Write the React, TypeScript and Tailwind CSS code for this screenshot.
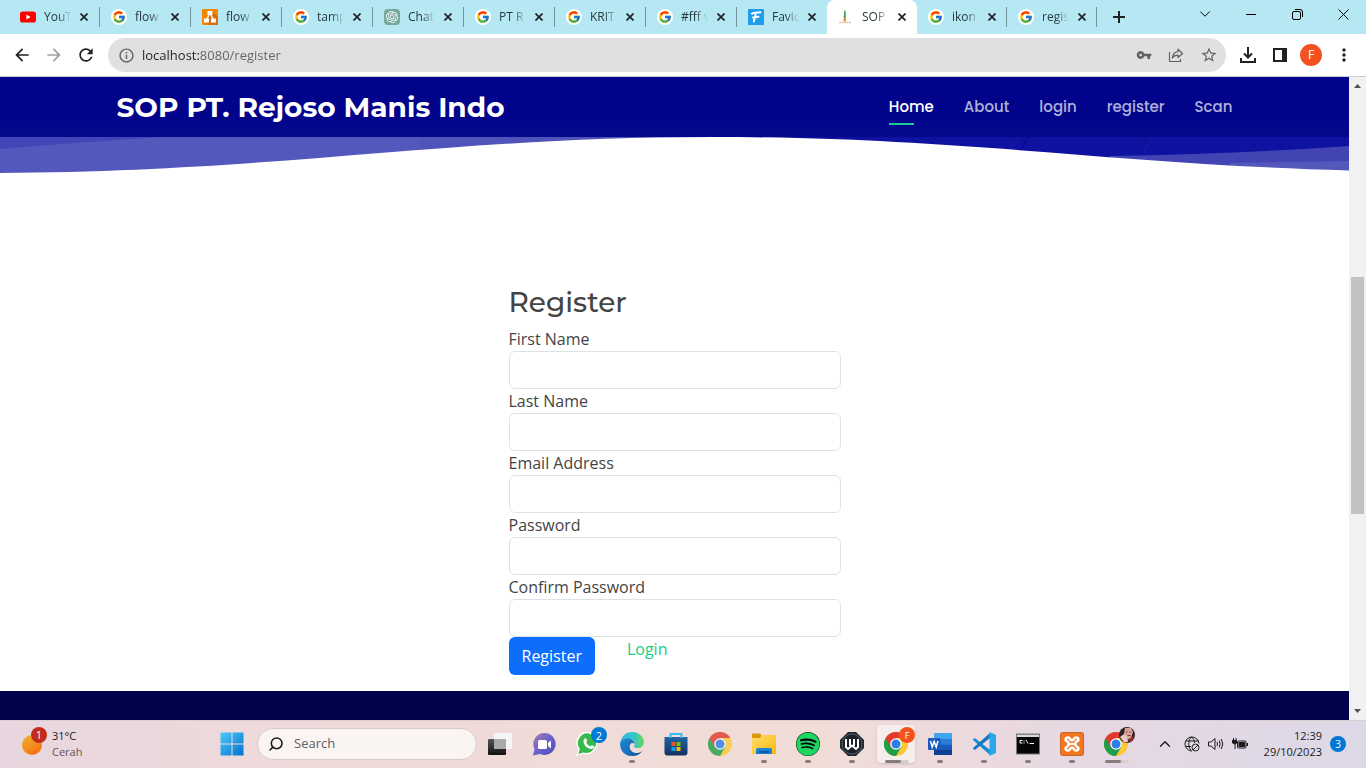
import React from "react";
import { FcGoogle } from "react-icons/fc";
import { FaSpotify } from "react-icons/fa";
import { SiOpenai } from "react-icons/si";
import {
  MdArrowBack,
  MdArrowForward,
  MdInfoOutline,
  MdMoreVert,
  MdRefresh,
  MdStarBorder,
  MdVpnKey,
} from "react-icons/md";
import { ChevronDown, ChevronUp, Search } from "lucide-react";

const Google = () => (
  <span className="flex size-4 items-center justify-center rounded-full bg-white">
    <FcGoogle size={14} />
  </span>
);

const YouTube = () => (
  <svg viewBox="0 0 16 16" className="size-4">
    <rect y="2.5" width="16" height="11" rx="2.6" fill="#f00" />
    <path d="M6.4 5.6v4.8L10.6 8z" fill="#fff" />
  </svg>
);

const Diagram = () => (
  <svg viewBox="0 0 16 16" className="size-4">
    <rect width="16" height="16" rx="1" fill="#f08705" />
    <path d="m10 2 6 6v8H8l-5-3z" fill="#df6c0c" />
    <path d="M8 4 4.5 11M8 4l3.5 7" stroke="#fff" strokeWidth="1.3" />
    <path d="M5.5 2h5v4h-5zM2 9.5h5v4H2zM9 9.5h5v4H9z" fill="#fff" />
  </svg>
);

const ChatGpt = () => (
  <span className="flex size-4 items-center justify-center rounded-sm bg-[#75a99b] text-white">
    <SiOpenai size={12} />
  </span>
);

const Favicon = () => (
  <svg viewBox="0 0 16 16" className="size-4">
    <rect width="16" height="16" rx="1" fill="#209cee" />
    <path d="M4 4.6C6 3 9 3.8 12.5 3.2M8 4 5.8 12.5M5 8.4c2-.6 4-.4 5.5-.6" fill="none" stroke="#fff" strokeWidth="2" strokeLinecap="round" />
  </svg>
);

const Cane = () => (
  <svg viewBox="0 0 16 16" className="size-4">
    <path d="M5.500 7h2.500v5.500H5.500z" fill="#e79a3c" />
    <path d="M6 3 6.800 1l.9 2v5H6z" fill="#3e9b4f" />
    <path d="M1 13.500h12.500" stroke="#e8bfa8" strokeWidth="1.500" strokeDasharray="2 .5" />
  </svg>
);

const tabs = [
  { title: "YouT", icon: <YouTube /> },
  { title: "flow", icon: <Google /> },
  { title: "flow", icon: <Diagram /> },
  { title: "tamp", icon: <Google /> },
  { title: "Chat", icon: <ChatGpt /> },
  { title: "PT R", icon: <Google /> },
  { title: "KRIT", icon: <Google /> },
  { title: "#fff v", icon: <Google /> },
  { title: "Favic", icon: <Favicon /> },
  { title: "SOP", icon: <Cane />, active: true },
  { title: "ikon", icon: <Google /> },
  { title: "regis", icon: <Google /> },
];

function TabStrip() {
  return (
    <div className="flex h-[34px] shrink-0 bg-[#b5e8f3] pl-[9px]">
      <div role="tablist" className="flex min-w-0">
        {tabs.map((tab, i) => (
          <div
            key={i}
            className={`flex min-w-0 items-center pl-[11px] ${i < 8 ? "w-[91px]" : "w-[90px]"} ${
              tab.active ? "rounded-t-lg bg-white" : i === 8 ? "rounded-br-lg" : ""
            }`}
          >
            <span className="shrink-0">{tab.icon}</span>
            <button
              role="tab"
              aria-selected={!!tab.active}
              className="ml-2 w-[30px] text-left text-xs whitespace-nowrap text-[#26383c] [mask-image:linear-gradient(to_right,black_14px,transparent_27px)]"
            >
              {tab.title}
            </button>
            <button aria-label="Close tab" className="ml-1.5 text-[#202124]">
              <svg viewBox="0 0 8 8" className="size-2" stroke="currentColor" strokeWidth="1.700">
                <path d="m.5.5 7 7M7.500.5l-7 7" />
              </svg>
            </button>
            <span className={`ml-auto h-5 w-px ${i === 8 || tab.active ? "" : "bg-[#6f949b]"}`} />
          </div>
        ))}
      </div>
      <button aria-label="New tab" className="ml-4 text-[#202124]">
        <svg viewBox="0 0 12 12" className="size-3" stroke="currentColor" strokeWidth="2">
          <path d="M6 0v12M0 6h12" />
        </svg>
      </button>
      <div className="ml-auto flex h-7 shrink-0 items-center text-black">
        <button aria-label="Search tabs" className="flex w-[46px] justify-center">
          <ChevronDown size={18} strokeWidth={1.3} />
        </button>
        <button aria-label="Minimize" className="flex w-[46px] justify-center">
          <svg viewBox="0 0 10 10" className="size-2.5" stroke="currentColor"><path d="M0 5.5h10" /></svg>
        </button>
        <button aria-label="Restore" className="flex w-[46px] justify-center">
          <svg viewBox="0 0 11 11" className="size-[11px]" stroke="currentColor" fill="none">
            <rect x=".5" y="2.5" width="8" height="8" rx="1.5" />
            <path d="M3 .5h5a2.5 2.5 0 0 1 2.5 2.5v5" />
          </svg>
        </button>
        <button aria-label="Close" className="flex w-[46px] justify-center">
          <svg viewBox="0 0 11 11" className="size-[11px]" stroke="currentColor"><path d="m.5.5 10 10M10.500.5l-10 10" /></svg>
        </button>
      </div>
    </div>
  );
}

function Toolbar() {
  return (
    <div className="flex h-[43px] shrink-0 items-center border-b border-[#c8ced2] bg-white pr-3 pl-3 text-[#202124]">
      <button aria-label="Back"><MdArrowBack size={20} /></button>
      <button aria-label="Forward" className="ml-3 text-[#a0a1a2]"><MdArrowForward size={20} /></button>
      <button aria-label="Reload" className="ml-3"><MdRefresh size={20} /></button>
      <div className="ml-3 flex h-[34px] min-w-0 flex-1 items-center rounded-full bg-[#e0e0e0] pr-2 pl-[10px] text-[#5f6368]">
        <MdInfoOutline size={17} className="shrink-0" />
        <input
          aria-label="Address"
          defaultValue="localhost:8080/register"
          className="ml-[7px] min-w-0 flex-1 bg-[linear-gradient(to_right,#202124_57px,#5f6368_57px)] bg-clip-text text-[13px] leading-5 text-transparent caret-black outline-none"
        />
        <div className="flex items-center gap-4">
          <button aria-label="Passwords"><MdVpnKey size={16} /></button>
          <button aria-label="Share">
            <svg viewBox="0 0 16 16" className="size-4" fill="none" stroke="currentColor" strokeWidth="1.2">
              <path d="M1.500 5v9.500h11V12" />
              <path d="M10 2.200 14.500 6.500 10 10.500V8.200c-2.700 0-4.500.8-5.700 2.800.4-3.700 2.300-5.800 5.700-6.300z" strokeLinejoin="round" />
            </svg>
          </button>
          <button aria-label="Bookmark"><MdStarBorder size={18} /></button>
        </div>
      </div>
      <button aria-label="Downloads" className="ml-3.5">
        <svg viewBox="0 0 16 16" className="size-4" fill="none" stroke="currentColor" strokeWidth="2">
          <path d="M8 0v10M4 6.500l4 4 4-4M1 11v4h14v-4" />
        </svg>
      </button>
      <button aria-label="Side panel" className="ml-4">
        <svg viewBox="0 0 16 16" className="size-4">
          <path d="M1 1h14v14H1zM3 3v10h7V3z" fill="currentColor" fillRule="evenodd" />
        </svg>
      </button>
      <button aria-label="Profile" className="ml-3 flex size-[22px] items-center justify-center rounded-full bg-[#f4511e] text-xs text-white">F</button>
      <button aria-label="Menu" className="ml-3"><MdMoreVert size={20} /></button>
    </div>
  );
}

function SiteHeader() {
  return (
    <header className="bg-[linear-gradient(to_bottom,#01038b_60%,#07098c)]">
      <div className="mx-auto flex h-[60px] max-w-[1116px] items-center justify-between">
        <h1 className="font-[Montserrat,sans-serif] text-[28px] leading-none font-bold whitespace-nowrap text-white">
          <a href="#home">SOP PT. Rejoso Manis Indo</a>
        </h1>
        <nav className="flex gap-[30px] font-[Poppins,sans-serif] text-[15px] font-medium text-white/70">
          <a href="#home" className="relative text-white after:absolute after:-bottom-[7px] after:left-0 after:h-0.5 after:w-[25px] after:bg-[#1acc8d]">Home</a>
          <a href="#about">About</a>
          <a href="#login">login</a>
          <a href="#register">register</a>
          <a href="#scan">Scan</a>
        </nav>
      </div>
    </header>
  );
}

function Waves() {
  return (
    <svg viewBox="0 0 1349 36" preserveAspectRatio="none" className="block h-9 w-full" aria-hidden="true">
      <rect width="1349" height="36" fill="#0f12a1" />
      <path d="M0 0h700v36H0z" fill="#4244b7" />
      <path d="M0 12Q80 5 165 0H700v36H0z" fill="#5458bc" />
      <path d="M420 0h280v20H420z" fill="#5053b9" />
      <path d="M1110 19Q1240 17 1349 9v27h-239z" fill="#4244b3" />
      <path d="M1230 26 1349 24v12h-119z" fill="#5558bb" />
      <path d="m846 0-8 10M1028 0l-10 18" stroke="#050690" strokeWidth="2" opacity=".6" />
      <path d="m1018 0-10 18M1152 0l-8 16" stroke="#2024a8" opacity=".6" />
      <path d="M0 36C290 34 450 0 712 0 960 0 1110 27 1349 33.500V36z" fill="#fff" />
    </svg>
  );
}

const fields = [
  { id: "first", label: "First Name", type: "text" },
  { id: "last", label: "Last Name", type: "text" },
  { id: "email", label: "Email Address", type: "email" },
  { id: "password", label: "Password", type: "password" },
  { id: "confirm", label: "Confirm Password", type: "password" },
];

function RegisterForm() {
  return (
    <form className="mx-auto w-[332px] pt-28 pb-4 text-base leading-6 text-[#444]">
      <h2 className="mb-2 font-[Montserrat,sans-serif] text-[28px] leading-[34px] font-medium">Register</h2>
      {fields.map((f) => (
        <div key={f.id}>
          <label htmlFor={f.id} className="block">{f.label}</label>
          <input id={f.id} type={f.type} className="block h-[38px] w-full rounded-md border border-[#dee2e6] bg-white px-3" />
        </div>
      ))}
      <div className="flex items-start gap-8">
        <button type="button" className="h-[38px] rounded-md bg-[#0d6efd] px-[13px] text-white">Register</button>
        <a href="#login" className="text-[#1acc8d]">Login</a>
      </div>
    </form>
  );
}

function Scrollbar() {
  return (
    <div className="flex w-[17px] shrink-0 flex-col items-center bg-[#f1f1f1] py-[7px]" aria-hidden="true">
      <svg viewBox="0 0 7 4" className="h-1 w-[7px]"><path d="M0 4h7L3.500 0z" fill="#505050" /></svg>
      <div className="grow-[189]" />
      <div className="w-[13px] grow-[237] bg-[#c1c1c1]" />
      <div className="grow-[195]" />
      <svg viewBox="0 0 7 4" className="h-1 w-[7px]"><path d="M0 0h7L3.500 4z" fill="#505050" /></svg>
    </div>
  );
}

const Chrome = ({ soft = false }: { soft?: boolean }) => (
  <svg viewBox="0 0 24 24" className={`size-6 ${soft ? "opacity-80" : ""}`}>
    <circle cx="12" cy="12" r="12" fill="#fcc934" />
    <path d="M12 12 1.600 6A12 12 0 0 0 12 24l5.200-9z" fill="#1e9e4a" />
    <path d="M12 12 6.800 15 1.600 6a12 12 0 0 1 20.800 0H12z" fill="#e0392f" />
    <circle cx="12" cy="12" r="5.800" fill="#fff" />
    <circle cx="12" cy="12" r="4.500" fill="#2b7de9" />
  </svg>
);

const TaskView = () => (
  <svg viewBox="0 0 24 24" className="size-6">
    <defs>
      <linearGradient id="tv" x2="0" y2="1"><stop stopColor="#555" /><stop offset="1" stopColor="#111" /></linearGradient>
    </defs>
    <rect y="7" width="18" height="16" rx="1" fill="url(#tv)" />
    <rect x="6" y="1" width="18" height="16" rx="1" fill="#f5f5f5" />
    <path d="M6 7h12v10H6z" fill="#aaa" />
  </svg>
);

const Meet = () => (
  <svg viewBox="0 0 24 24" className="size-6">
    <defs>
      <linearGradient id="mt" x2="1" y2="1"><stop stopColor="#a77bae" /><stop offset=".5" stopColor="#6b63cc" /><stop offset="1" stopColor="#4a4bb3" /></linearGradient>
    </defs>
    <path d="M12.500 1A11 11 0 1 1 8 22l-7 1.500L2.500 17A11 11 0 0 1 12.500 1z" fill="url(#mt)" />
    <rect x="6" y="8" width="9" height="9" rx="1.500" fill="#fff" />
    <path d="m16 11 3-2.500v8L16 14z" fill="#fff" />
  </svg>
);

const WhatsApp = () => (
  <svg viewBox="0 0 24 24" className="size-6">
    <path d="M13 0A11 11 0 1 1 7 21.800L0 24l2.300-7A11 11 0 0 1 13 0z" fill="#fff" />
    <path d="M13 1.500A9.700 9.700 0 1 1 7.300 20.500l-5 1.500 1.600-5A9.700 9.700 0 0 1 13 1.500z" fill="#35b94b" />
    <path d="M8.700 6.500c.7-.5 1.300-.4 1.700.5l.8 1.800c.2.600-.6 1.300-1 1.700 1 2 2.300 3.100 4.300 4 .5-.6 1-1.500 1.700-1.200l2 1c.8.500.3 1.700-.5 2.300-2.500 1.800-10.500-1.900-10.200-7.700.1-1 .5-1.900 1.200-2.400z" fill="#fff" />
  </svg>
);

const Edge = () => (
  <svg viewBox="0 0 24 24" className="size-6">
    <defs>
      <linearGradient id="eg1" x2="1"><stop stopColor="#35b5ea" /><stop offset=".6" stopColor="#34c6c5" /><stop offset="1" stopColor="#68dd4a" /></linearGradient>
      <linearGradient id="eg2" x2="1" y2="1"><stop stopColor="#1c8ed8" /><stop offset="1" stopColor="#134c94" /></linearGradient>
    </defs>
    <path d="M.3 10C2 3 7 0 12 0c7 0 12 5 12 10 0 4-3 6-6 6-3.500 0-5-1.300-3.500-2.800C16 11 14 7 9.500 7 5 7 1 9 .3 10z" fill="url(#eg1)" />
    <path d="M.2 10.500C2 7.500 5.500 6 9 6.500c4 .5 6 3.500 5.500 5.800-.3-1-1.500-1.600-2.600-1.300-3 1-3 6 0 8.500 3 2.200 7 2 10.500-.8C18 26 6 26 1.500 18 .2 15.500-.2 13 .2 10.500z" fill="url(#eg2)" />
    <path d="M8.500 11C6 15 8 21 14 23.800 9 24.500 4 22 1.500 18 2 14 4.500 11.500 8.500 11z" fill="#1b75c9" opacity=".7" />
  </svg>
);

const Store = () => (
  <svg viewBox="0 0 24 24" className="size-6">
    <defs><linearGradient id="st" x2="0" y2="1"><stop stopColor="#1f66a5" /><stop offset="1" stopColor="#16325f" /></linearGradient></defs>
    <path d="M.5 5h23v15.500a3 3 0 0 1-3 3h-17a3 3 0 0 1-3-3z" fill="url(#st)" />
    <path d="M6.500 6V2h11v4" fill="none" stroke="#31bdf5" strokeWidth="2" strokeLinejoin="round" />
    <path d="M7.500 10h4v4h-4z" fill="#f25022" /><path d="M12.500 10h4v4h-4z" fill="#7fba00" />
    <path d="M7.500 15h4v4h-4z" fill="#00a4ef" /><path d="M12.500 15h4v4h-4z" fill="#ffb900" />
  </svg>
);

const Explorer = () => (
  <svg viewBox="0 0 24 24" className="size-6">
    <defs><linearGradient id="ex" x2="1" y2="1"><stop stopColor="#ffdd6b" /><stop offset="1" stopColor="#fbb90f" /></linearGradient></defs>
    <path d="M0 1.500h8l2 2.500v4H0z" fill="#d9980a" />
    <path d="M0 6h8l2-3h14v19H0z" fill="url(#ex)" />
    <path d="M4 22v-4a2 2 0 0 1 2-2h12a2 2 0 0 1 2 2v4z" fill="#1783d6" />
    <path d="M7 19h10v2H7z" fill="#0c5aa4" />
  </svg>
);

const Spotify = () => (
  <span className="flex size-6 items-center justify-center rounded-full bg-black text-[#1ed760]"><FaSpotify size={24} /></span>
);

const Warp = () => (
  <svg viewBox="0 0 24 24" className="size-6">
    <path d="M8 0h8l8 8v8l-8 8H8l-8-8V8z" fill="#202832" />
    <circle cx="12" cy="12" r="10" fill="#1b222c" stroke="#68717d" strokeWidth=".7" />
    <path d="M6 7v8l2 2 4-3.500 4 3.500 2-2V7M10 7v7M14 7v7" fill="none" stroke="#fff" strokeWidth="2" />
  </svg>
);

const Word = () => (
  <svg viewBox="0 0 24 24" className="size-6">
    <rect x="6" y="1" width="18" height="22" rx="1" fill="#41a5ee" />
    <path d="M6 7h18v5.500H6z" fill="#2b7cd3" /><path d="M6 12.500h18V18H6z" fill="#185abd" /><path d="M6 18h18v5H6z" fill="#103f91" />
    <rect y="6" width="12.500" height="12" rx="1" fill="#185abd" />
    <path d="m2.500 9 1.700 6 2-5.500 2 5.500L10 9" fill="none" stroke="#fff" strokeWidth="1.500" />
  </svg>
);

const Code = () => (
  <svg viewBox="0 0 24 24" className="size-6">
    <path d="m.8 7.700 2-1.700L18 18v5z" fill="#168bd2" />
    <path d="m.8 16.300 2 1.700L18 6V1z" fill="#1279bf" />
    <path d="m17.500 0 6.500 3v18l-6.500 3z" fill="#2aa7ee" />
  </svg>
);

const Terminal = () => (
  <svg viewBox="0 0 24 24" className="size-6">
    <rect x=".5" y="2" width="23" height="20" fill="#050505" stroke="#777" />
    <path d="M1 2.500h22V5H1z" fill="#d9d9d9" />
    <path d="M6.500 8.500H4v2.500h2.500M8 8.500v1M8 10.500v1M10 8l2 3.500M13.500 11.500H18" fill="none" stroke="#fff" />
  </svg>
);

const Xampp = () => (
  <svg viewBox="0 0 24 24" className="size-6">
    <rect x=".5" y=".5" width="23" height="23" rx="2" fill="#f37623" stroke="#c9621b" />
    <path
      d="M8 5.500C5 5.500 5 9 7.500 9.500 9 10 9 14 7.500 14.500 5 15 5 18.500 8 18.500c2.500 0 2-3 4-3s1.500 3 4 3c3 0 3-3.500.5-4-1.500-.5-1.500-4.500 0-5 2.500-.5 2.500-4-.5-4-2.500 0-2 3-4 3s-1.500-3-4-3z"
      fill="none"
      stroke="#fff"
      strokeWidth="2.600"
    />
    <path d="M9.500 12h5" stroke="#fff" strokeWidth="2" />
  </svg>
);

const Face = () => (
  <svg viewBox="0 0 16 16" className="size-4">
    <circle cx="8" cy="8" r="8" fill="#34222a" />
    <path d="M6 1h6l2 4-2 6-4 2-3-6z" fill="#d7a49b" />
    <path d="M1 10 5 7l3 3 1 5-4 .500z" fill="#ecc7bd" />
    <path d="m11 11 4-2-2 5-4 2z" fill="#a02e35" />
    <path d="M7 5h1.500M10.500 5H12M8.500 8.500h3" stroke="#733b3b" />
  </svg>
);

const apps = [
  { name: "Task view", icon: <TaskView /> },
  { name: "Chat", icon: <Meet /> },
  { name: "WhatsApp", icon: <WhatsApp />, badge: <span className="flex size-4 items-center justify-center rounded-full bg-[#0078d4] text-[11px] leading-none text-white">2</span> },
  { name: "Edge", icon: <Edge />, open: true },
  { name: "Store", icon: <Store /> },
  { name: "Chrome", icon: <Chrome soft /> },
  { name: "File Explorer", icon: <Explorer />, open: true },
  { name: "Spotify", icon: <Spotify />, open: true },
  { name: "Workspace", icon: <Warp />, open: true },
  { name: "Chrome, profile F", icon: <Chrome />, wide: true, active: true, badge: <span className="flex size-4 items-center justify-center rounded-full bg-[#f4511e] text-[9px] leading-none text-white">F</span> },
  { name: "Word", icon: <Word />, open: true },
  { name: "Code editor", icon: <Code />, open: true },
  { name: "Terminal", icon: <Terminal />, open: true },
  { name: "XAMPP", icon: <Xampp />, open: true },
  { name: "Chrome, personal", icon: <Chrome />, wide: true, badge: <Face /> },
];

function Taskbar() {
  return (
    <footer className="flex h-12 shrink-0 items-center bg-[linear-gradient(100deg,#e8d6e0_0%,#eedada_20%,#f1dcd7_60%,#e6d8e3_80%,#ddd8e8_100%)] text-[11px] text-[#1b1b1b] inset-shadow-[0_1px_0_#dccdd0]">
      <button className="flex flex-1 items-center gap-2 pl-[22px] text-left">
        <span className="relative size-[22px] shrink-0">
          <span className="absolute bottom-0 left-0 size-5 rounded-full bg-linear-150 from-[#efb52d] to-[#f3640d]" />
          <span className="absolute -top-1.5 left-[9px] flex size-4 items-center justify-center rounded-full bg-[#c42b1c] text-[11px] text-white">1</span>
        </span>
        <span className="leading-4">31°C<br /><span className="text-[#5d5659]">Cerah</span></span>
      </button>
      <div className="flex h-full items-center">
        <button aria-label="Start" className="flex w-11 justify-center">
          <svg viewBox="0 0 24 24" className="size-6">
            <defs><linearGradient id="win" x2="1" y2="1" gradientUnits="userSpaceOnUse" gradientTransform="scale(24)"><stop stopColor="#4fcbfa" /><stop offset="1" stopColor="#006fce" /></linearGradient></defs>
            <path d="M.5.5h11v11H.5zM12.500.5h11v11h-11zM.5 12.500h11v11H.5zM12.500 12.500h11v11h-11z" fill="url(#win)" />
          </svg>
        </button>
        <div className="mr-px ml-[3px] flex h-8 w-[220px] items-center gap-[10px] rounded-full border border-[#dbc9ca] bg-[#faf4f3] px-[10px]">
          <Search size={16} strokeWidth={2.3} className="shrink-0 -scale-x-100" />
          <input aria-label="Search" placeholder="Search" className="w-full bg-transparent text-[13px] outline-none placeholder:text-[#626062]" />
        </div>
        {apps.map((app) => (
          <button key={app.name} aria-label={app.name} className="flex h-full w-11 items-center justify-center">
            <span className={`relative flex h-[38px] w-[38px] items-center justify-center rounded ${app.active ? "bg-white/50 shadow-sm" : ""}`}>
              {app.icon}
              {app.badge && <span className="absolute top-[2px] right-0">{app.badge}</span>}
              {app.open && <span className="absolute bottom-0 h-[3px] w-1.5 rounded-full bg-[#857d7d]" />}
              {app.wide && (
                <span className="absolute bottom-0 left-2 h-[3px] w-6 rounded-full bg-[#d7cdcf]">
                  <span className="block h-full w-4 rounded-full bg-[#857d7d]" />
                </span>
              )}
            </span>
          </button>
        ))}
      </div>
      <div className="flex w-[228px] shrink-0 items-center justify-end gap-2 pr-5">
        <ChevronUp size={18} strokeWidth={1.8} className="mr-0.5" />
        <svg viewBox="0 0 16 16" className="size-4" fill="none" stroke="currentColor">
          <path d="M8 15A7 7 0 1 1 15 7.500M1.500 5h13M1.500 10.500H7M7 14.500C3.500 10 4.500 4 7.500 1c2 1.500 3 3.500 3 6" />
          <circle cx="11.500" cy="11.500" r="3.500" /><path d="m9 14 5-5" />
        </svg>
        <svg viewBox="0 0 16 16" className="size-4" fill="none" stroke="currentColor" strokeLinejoin="round">
          <path d="M.5 6v4h2.500L7 13.500v-11L3 6zM9 6q1 2 0 4M11.200 4.500q2 3.500 0 7M13.300 3q3 5 0 10" />
        </svg>
        <svg viewBox="0 0 16 16" className="size-4">
          <rect x="5.500" y="5" width="8.500" height="7" rx="1" fill="none" stroke="currentColor" />
          <path d="M6.500 6h6.500v5H6.500zM14.500 7H16v3h-1.500zM0 4h5v3L3.500 8.500V13h-1V8.500L0 7zM1 2h1v2H1zM3.500 2h1v2h-1z" fill="currentColor" />
        </svg>
        <time dateTime="2023-10-29T12:39" className="ml-2 text-right leading-4">12:39<br />29/10/2023</time>
        <span className="flex size-4 items-center justify-center rounded-full bg-[#0078d4] text-[10px] text-white">3</span>
      </div>
    </footer>
  );
}

export default function App() {
  return (
    <div className="flex h-screen flex-col overflow-hidden bg-white font-['Open_Sans',sans-serif]">
      <TabStrip />
      <Toolbar />
      <div className="flex min-h-0 flex-1">
        <div className="flex min-w-0 flex-1 flex-col overflow-hidden">
          <SiteHeader />
          <Waves />
          <main><RegisterForm /></main>
          <div className="flex-1 bg-[#01014c]" />
        </div>
        <Scrollbar />
      </div>
      <Taskbar />
    </div>
  );
}
